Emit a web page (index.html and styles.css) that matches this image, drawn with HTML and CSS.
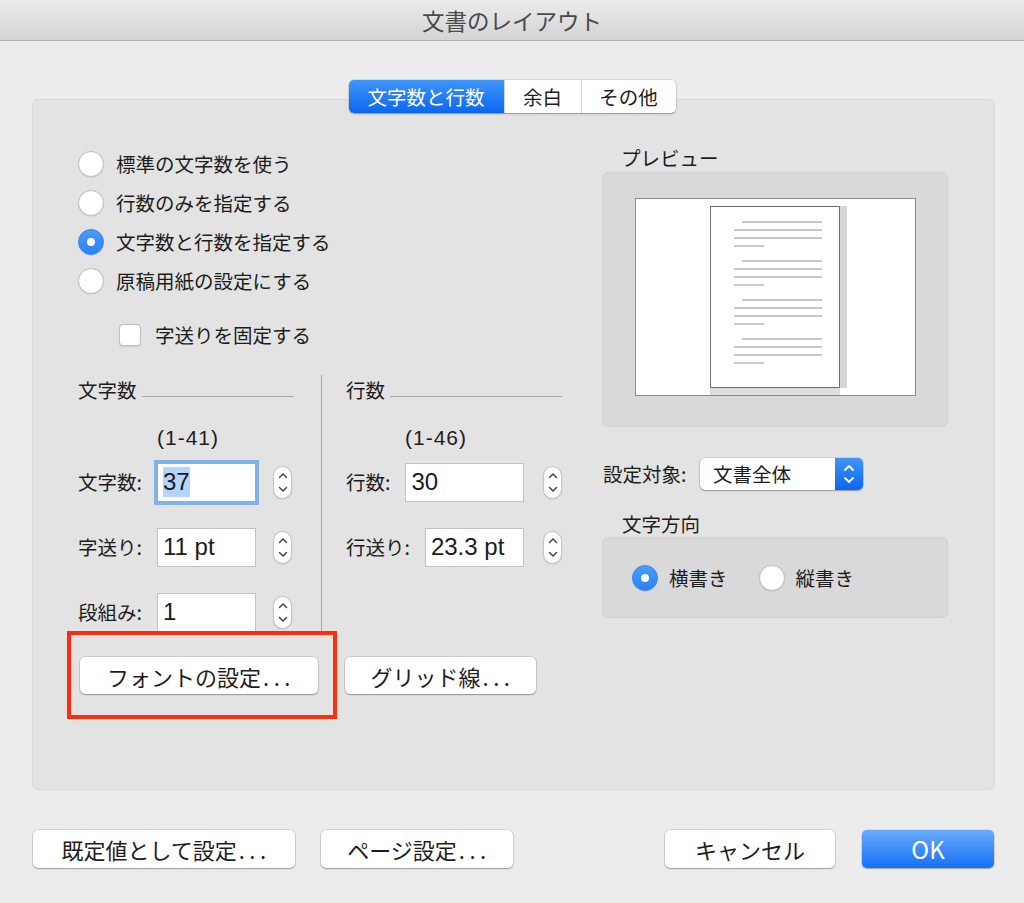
FILE: index.html
```html
<!DOCTYPE html>
<html lang="ja">
<head>
<meta charset="utf-8">
<title>文書のレイアウト</title>
<link rel="stylesheet" href="styles.css">
</head>
<body>
<header class="titlebar">文書のレイアウト</header>

<nav class="tabs">
  <span class="tab tab-chars active">文字数と行数</span>
  <span class="tab tab-margin">余白</span>
  <span class="tab tab-other">その他</span>
</nav>

<section class="panel">
  <div class="left">
    <div class="radios">
      <div class="radio-row"><span class="radio"></span><span>標準の文字数を使う</span></div>
      <div class="radio-row"><span class="radio"></span><span>行数のみを指定する</span></div>
      <div class="radio-row"><span class="radio on"></span><span>文字数と行数を指定する</span></div>
      <div class="radio-row"><span class="radio"></span><span>原稿用紙の設定にする</span></div>
    </div>
    <div class="check-row"><span class="checkbox"></span><span>字送りを固定する</span></div>

    <div class="groups">
      <div class="group group-chars">
        <div class="group-head"><span>文字数</span><span class="rule"></span></div>
        <div class="range">(1-41)</div>
        <div class="fields">
          <div class="field">
            <span class="field-label">文字数:</span>
            <span class="input focused"><span class="selected">37</span></span>
            <span class="stepper"><svg width="10" height="23" viewBox="0 0 10 23"><path d="M1.5 6.5 L5 3 L8.5 6.5 M1.5 16.5 L5 20 L8.5 16.5" fill="none" stroke="#3a3a3a" stroke-width="1.4" stroke-linecap="round" stroke-linejoin="round"/></svg></span>
          </div>
          <div class="field">
            <span class="field-label">字送り:</span>
            <span class="input">11 pt</span>
            <span class="stepper"><svg width="10" height="23" viewBox="0 0 10 23"><path d="M1.5 6.5 L5 3 L8.5 6.5 M1.5 16.5 L5 20 L8.5 16.5" fill="none" stroke="#3a3a3a" stroke-width="1.4" stroke-linecap="round" stroke-linejoin="round"/></svg></span>
          </div>
          <div class="field">
            <span class="field-label">段組み:</span>
            <span class="input">1</span>
            <span class="stepper"><svg width="10" height="23" viewBox="0 0 10 23"><path d="M1.5 6.5 L5 3 L8.5 6.5 M1.5 16.5 L5 20 L8.5 16.5" fill="none" stroke="#3a3a3a" stroke-width="1.4" stroke-linecap="round" stroke-linejoin="round"/></svg></span>
          </div>
        </div>
      </div>
      <div class="group group-lines">
        <div class="group-head"><span>行数</span><span class="rule"></span></div>
        <div class="range">(1-46)</div>
        <div class="fields">
          <div class="field">
            <span class="field-label">行数:</span>
            <span class="input">30</span>
            <span class="stepper"><svg width="10" height="23" viewBox="0 0 10 23"><path d="M1.5 6.5 L5 3 L8.5 6.5 M1.5 16.5 L5 20 L8.5 16.5" fill="none" stroke="#3a3a3a" stroke-width="1.4" stroke-linecap="round" stroke-linejoin="round"/></svg></span>
          </div>
          <div class="field">
            <span class="field-label">行送り:</span>
            <span class="input">23.3 pt</span>
            <span class="stepper"><svg width="10" height="23" viewBox="0 0 10 23"><path d="M1.5 6.5 L5 3 L8.5 6.5 M1.5 16.5 L5 20 L8.5 16.5" fill="none" stroke="#3a3a3a" stroke-width="1.4" stroke-linecap="round" stroke-linejoin="round"/></svg></span>
          </div>
        </div>
      </div>
    </div>

    <div class="buttons-row">
      <button class="btn btn-font">フォントの設定<span class="dots">...</span></button>
      <button class="btn btn-grid">グリッド線<span class="dots">...</span></button>
    </div>
  </div>

  <div class="right">
    <div class="preview-label">プレビュー</div>
    <div class="preview-box">
      <div class="sheet">
        <div class="page">
          <svg width="130" height="182" viewBox="0 0 130 182">
            <g stroke="#b3b3b3" stroke-width="1.4">
              <line x1="32" y1="16" x2="112" y2="16"/>
              <line x1="24" y1="24" x2="112" y2="24"/>
              <line x1="24" y1="32" x2="112" y2="32"/>
              <line x1="24" y1="40" x2="54" y2="40"/>
              <line x1="32" y1="55" x2="112" y2="55"/>
              <line x1="24" y1="63" x2="112" y2="63"/>
              <line x1="24" y1="71" x2="112" y2="71"/>
              <line x1="24" y1="79" x2="54" y2="79"/>
              <line x1="32" y1="94" x2="112" y2="94"/>
              <line x1="24" y1="102" x2="112" y2="102"/>
              <line x1="24" y1="110" x2="112" y2="110"/>
              <line x1="24" y1="118" x2="54" y2="118"/>
              <line x1="32" y1="133" x2="112" y2="133"/>
              <line x1="24" y1="141" x2="112" y2="141"/>
              <line x1="24" y1="149" x2="112" y2="149"/>
              <line x1="24" y1="157" x2="54" y2="157"/>
            </g>
          </svg>
        </div>
      </div>
    </div>

    <div class="target-row">
      <span class="target-label">設定対象:</span>
      <span class="select">
        <span class="select-text">文書全体</span>
        <span class="select-arrows"><svg width="12" height="22" viewBox="0 0 12 22"><path d="M2 7 L6 3 L10 7 M2 15 L6 19 L10 15" fill="none" stroke="#fff" stroke-width="1.8" stroke-linecap="round" stroke-linejoin="round"/></svg></span>
      </span>
    </div>

    <div class="dir-label">文字方向</div>
    <div class="dir-box">
      <div class="dir-option"><span class="radio on"></span><span>横書き</span></div>
      <div class="dir-option"><span class="radio"></span><span>縦書き</span></div>
    </div>
  </div>

  <div class="highlight"></div>
</section>

<footer class="footer">
  <div class="footer-group">
    <button class="btn btn-default">既定値として設定<span class="dots">...</span></button>
    <button class="btn btn-page">ページ設定<span class="dots">...</span></button>
  </div>
  <div class="footer-group footer-right">
    <button class="btn btn-cancel">キャンセル</button>
    <button class="btn btn-ok">OK</button>
  </div>
</footer>
</body>
</html>
```

FILE: styles.css
```css
* { box-sizing: border-box; }

html, body { margin: 0; padding: 0; }

body {
  width: 1024px;
  height: 903px;
  overflow: hidden;
  background: #ececec;
  font-family: "Noto Sans CJK JP", sans-serif;
  font-size: 19.5px;
  color: #1d1d1d;
}

.titlebar {
  height: 41px;
  background: linear-gradient(#ebebeb, #d4d4d4);
  border-bottom: 1px solid #b2b2b2;
  display: flex;
  align-items: center;
  justify-content: center;
  font-size: 22.5px;
  line-height: 1;
  color: #4a4a4a;
}

/* segmented tabs */
.tabs {
  display: flex;
  width: max-content;
  height: 33px;
  margin: 39px auto 0;
  background: #fff;
  border-radius: 5px;
  overflow: hidden;
  box-shadow: 0 0 0 0.5px rgba(0,0,0,0.15), 0 1px 1.5px rgba(0,0,0,0.3);
  position: relative;
  z-index: 1;
}
.tab {
  display: flex;
  align-items: center;
  justify-content: center;
  line-height: 1;
  font-size: 19.5px;
}
.tab + .tab { border-left: 1px solid #d3d3d3; }
.tab-chars { width: 155px; }
.tab-margin { width: 77px; }
.tab-other { width: 95px; }
.tab.active {
  background: linear-gradient(#3e95f8, #0c66f1);
  color: #fff;
}

/* main panel */
.panel {
  position: relative;
  margin: -14px 29px 0 32px;
  height: 691px;
  background: #e3e3e3;
  border: 1px solid #d9d9d9;
  border-radius: 6px;
  padding: 44px 0 0 45px;
  display: grid;
  grid-template-columns: 484px 347px;
  column-gap: 39px;
  align-items: start;
}

.radio-row {
  display: flex;
  align-items: center;
  gap: 12px;
  height: 39px;
  line-height: 1;
}

.radio {
  flex: none;
  width: 26px;
  height: 26px;
  border-radius: 50%;
  background: #fff;
  border: 1px solid #bfbfbf;
  box-shadow: 0 0.5px 1px rgba(0,0,0,0.12);
}
.radio.on {
  background: linear-gradient(#4b9df9, #2a81f4);
  border-color: #3584ee;
  display: flex;
  align-items: center;
  justify-content: center;
}
.radio.on::after {
  content: "";
  width: 8px;
  height: 8px;
  border-radius: 50%;
  background: #fff;
}

.check-row {
  display: flex;
  align-items: center;
  gap: 14px;
  height: 39px;
  margin-top: 15px;
  padding-left: 41px;
  line-height: 1;
}
.checkbox {
  flex: none;
  width: 22px;
  height: 22px;
  border-radius: 4px;
  background: #fff;
  border: 1px solid #bfbfbf;
  box-shadow: 0 0.5px 1px rgba(0,0,0,0.1);
}

/* two sub-columns */
.groups {
  display: grid;
  grid-template-columns: 243px 241px;
  margin-top: 21px;
}
.group-chars { padding-right: 27px; }
.group-lines {
  border-left: 1px solid #a9a9a9;
  padding-left: 24px;
}

.group-head {
  display: flex;
  align-items: center;
  gap: 5px;
  height: 30px;
  line-height: 1;
}
.rule {
  flex: 1;
  height: 1px;
  margin-top: 12px;
  background: #a9a9a9;
}

.range {
  margin-top: 19px;
  height: 28px;
  line-height: 28px;
  font-family: "Liberation Sans", "Noto Sans CJK JP", sans-serif;
  font-size: 21px;
  letter-spacing: 1px;
}
.group-chars .range { padding-left: 79px; }
.group-lines .range { padding-left: 59px; }

.fields {
  display: flex;
  flex-direction: column;
  gap: 23px;
  margin-top: 9px;
}
.field {
  display: flex;
  align-items: center;
  height: 42px;
  line-height: 1;
}
.group-chars .field-label { flex: none; width: 79px; }
.group-lines .field-label { flex: none; margin-right: 15px; }

.input {
  display: flex;
  align-items: center;
  height: 39px;
  background: #fff;
  border: 1px solid #c2c2c2;
  padding-left: 5px;
  font-family: "Liberation Sans", "Noto Sans CJK JP", sans-serif;
  font-size: 24px;
  color: #1a1a1a;
}
.group-chars .input { width: 99px; flex: none; }
.group-lines .input { flex: 1; }
.input.focused {
  border-color: #7eb1ea;
  box-shadow: 0 0 0 3px #80b3eb;
}
.selected {
  background: #b4d5fe;
  line-height: 30px;
}

.stepper {
  flex: none;
  width: 19px;
  height: 33px;
  border: 1px solid #c4c4c4;
  border-radius: 10px;
  background: #fff;
  box-shadow: 0 0.5px 1px rgba(0,0,0,0.15);
  display: flex;
  align-items: center;
  justify-content: center;
}
.group-chars .stepper { margin-left: 17px; }
.group-lines .stepper { margin-left: 19px; }

.buttons-row {
  display: flex;
  gap: 27px;
  margin-top: 24px;
  padding-left: 2px;
}

.btn {
  height: 37px;
  padding: 0;
  border: none;
  border-radius: 5px;
  background: #fff;
  box-shadow: 0 0 0 0.5px rgba(0,0,0,0.18), 0 1px 1.5px rgba(0,0,0,0.28);
  font-family: "Noto Sans CJK JP", sans-serif;
  font-size: 22px;
  line-height: 1;
  color: #1d1d1d;
}
.dots {
  letter-spacing: 4.5px;
  margin-left: 2px;
  margin-right: -4px;
}
.btn-font { width: 238px; }
.btn-grid { width: 191px; }

/* right column */
.preview-label {
  height: 28px;
  line-height: 28px;
  padding-left: 20px;
}
.preview-box {
  width: 346px;
  height: 255px;
  margin-left: 1px;
  background: #d9d9d9;
  border: 1px solid #d1d1d1;
  border-radius: 6px;
  padding-top: 25px;
  display: flex;
  justify-content: center;
  align-items: flex-start;
}
.sheet {
  width: 281px;
  height: 198px;
  background: #fff;
  border: 1px solid #8a8a8a;
  display: flex;
  align-items: center;
  justify-content: center;
}
.page {
  width: 130px;
  height: 182px;
  background: #fff;
  border: 1px solid #6f6f6f;
  box-shadow: 7px 0 0 #d6d6d6, 0 7px 0 #dedede;
}
.page svg { display: block; margin: -1px 0 0 -1px; }

.target-row {
  display: flex;
  align-items: center;
  height: 32px;
  margin-top: 31px;
  line-height: 1;
}
.target-label {
  flex: none;
  width: 99px;
  padding-left: 2px;
}
.select {
  display: flex;
  width: 163px;
  height: 32px;
  border-radius: 5px;
  background: #fff;
  box-shadow: 0 0 0 0.5px rgba(0,0,0,0.18), 0 1px 1.5px rgba(0,0,0,0.28);
  overflow: hidden;
}
.select-text {
  flex: 1;
  display: flex;
  align-items: center;
  padding-left: 13px;
}
.select-arrows {
  flex: none;
  width: 28px;
  background: linear-gradient(#3f95f8, #0c66f1);
  display: flex;
  align-items: center;
  justify-content: center;
}

.dir-label {
  height: 26px;
  line-height: 26px;
  margin-top: 21px;
  padding-left: 21px;
}
.dir-box {
  width: 346px;
  height: 81px;
  margin-left: 1px;
  background: #d9d9d9;
  border: 1px solid #d1d1d1;
  border-radius: 6px;
  padding-left: 29px;
  display: flex;
  align-items: center;
  gap: 31px;
}
.dir-option {
  display: flex;
  align-items: center;
  gap: 11px;
  line-height: 1;
}

/* annotation overlay */
.highlight {
  position: absolute;
  left: 34px;
  top: 531px;
  width: 270px;
  height: 88px;
  border: 4px solid #ff2d0f;
}

/* footer */
.footer {
  display: flex;
  justify-content: space-between;
  margin-top: 40px;
  padding: 0 30px 0 33px;
}
.footer-group { display: flex; gap: 26px; }
.footer-right { gap: 27px; }
.footer .btn { height: 38px; }
.btn-default { width: 262px; }
.btn-page { width: 192px; }
.btn-cancel { width: 170px; }
.btn-ok {
  width: 132px;
  background: linear-gradient(#6aabfa, #1570f4);
  color: #fff;
  font-size: 24px;
  box-shadow: 0 0 0 0.5px rgba(0,0,0,0.15), 0 1px 1.5px rgba(0,0,0,0.25);
}
```
